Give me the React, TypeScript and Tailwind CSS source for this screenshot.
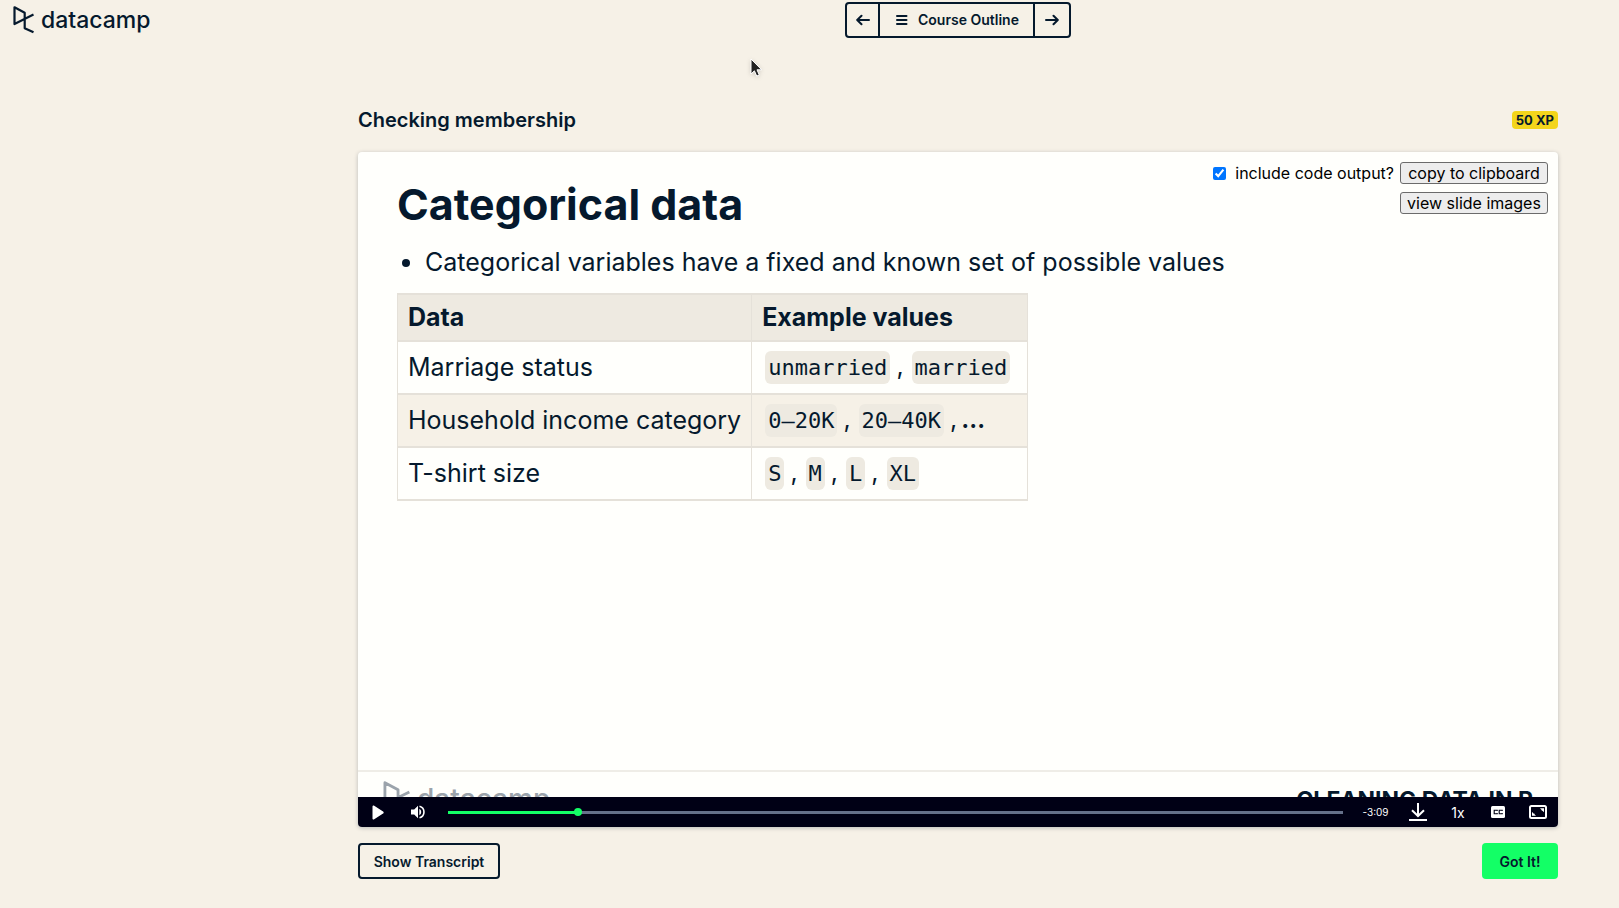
import { useState } from 'react'

type IconProps = { className?: string }

function Logo({ className, small }: { className?: string; small?: boolean }) {
  return (
    <span className={`flex items-center gap-[7px] ${className ?? ''}`}>
      <svg
        viewBox="0 0 21 28"
        fill="none"
        stroke="currentColor"
        strokeWidth="2.2"
        strokeLinejoin="round"
        className={small ? 'h-7 w-[21px]' : 'h-[36px] w-[27px]'}
        aria-hidden="true"
      >
        <path d="M20.500 8.500 1.500 18V1.300L11.700 6.800v15.400l8.800 4.100" />
      </svg>
      <span className={small ? 'text-[23px] font-medium leading-7' : 'text-[28px] font-medium leading-9'}>datacamp</span>
    </span>
  )
}

function ArrowIcon({ className }: IconProps) {
  return (
    <svg viewBox="0 0 14 12" fill="none" stroke="currentColor" strokeWidth="2" strokeLinecap="round" strokeLinejoin="round" className={`h-3 w-[14px] ${className ?? ''}`} aria-hidden="true">
      <path d="M13 6H1.5M5.500 1.700 1.200 6l4.300 4.300" />
    </svg>
  )
}

function MenuIcon() {
  return (
    <svg viewBox="0 0 12 10" fill="none" stroke="currentColor" strokeWidth="2" strokeLinecap="round" className="h-[10px] w-3" aria-hidden="true">
      <path d="M1 1h9.5M1 5h9.5M1 9h9.5" />
    </svg>
  )
}

function PlayIcon() {
  return (
    <svg viewBox="0 0 12 15" fill="currentColor" className="h-[15px] w-3" aria-hidden="true">
      <path d="M.5 1.500C.5.5 1.400.2 2.200.7l8.900 5.700c.8.5.8 1.600 0 2.100l-8.900 5.800c-.8.5-1.700.1-1.700-.8z" />
    </svg>
  )
}

function VolumeIcon() {
  return (
    <svg viewBox="0 0 15 14" className="h-[14px] w-[15px]" aria-hidden="true">
      <path fill="currentColor" d="M0 4.500h3.200L7 .7v12.600L3.200 9.500H0z" />
      <path fill="currentColor" d="M8.300 3.800a3.600 3.600 0 0 1 0 6.400z" />
      <path fill="none" stroke="currentColor" strokeWidth="1.600" d="M8.500 1.200a6 6 0 0 1 0 11.600" />
    </svg>
  )
}

function DownloadIcon() {
  return (
    <svg viewBox="0 0 18 18" fill="none" stroke="currentColor" strokeWidth="2" className="size-[18px]" aria-hidden="true">
      <path d="M9 0v13M3 7.200 9 13l6-5.800M0 17h18" />
    </svg>
  )
}

function CaptionsIcon() {
  return (
    <svg viewBox="0 0 14 12" className="h-3 w-[14px]" aria-hidden="true">
      <rect width="14" height="12" rx="1.500" fill="currentColor" />
      <path fill="none" stroke="#000015" strokeWidth="1.100" d="M6.200 5V4.300H3.200v3.400h3V7M11.200 5V4.300h-3v3.400h3V7" />
    </svg>
  )
}

function FullscreenIcon() {
  return (
    <svg viewBox="0 0 18 14" className="h-[14px] w-[18px]" aria-hidden="true">
      <rect x="1" y="1" width="16" height="12" rx="1.500" fill="none" stroke="currentColor" strokeWidth="2" />
      <path fill="currentColor" d="M11 3.300h4v4l-1.500-1.500-.8.300.2-.9zM3 6.700v4h4L5.500 9.300l-.2-.9-.9.200z" />
    </svg>
  )
}

function Pointer() {
  return (
    <svg viewBox="0 0 14 20" className="pointer-events-none absolute left-[750px] top-[58px] h-5 w-[14px] drop-shadow-sm" aria-hidden="true">
      <path d="M1 1v15l3.400-3.200 2.300 5.300 2.600-1.100L7 11.800h4.700z" fill="#222" stroke="#fff" strokeWidth="1" />
    </svg>
  )
}

function Code({ children }: { children: string }) {
  return (
    <code className="rounded-md bg-[#eeeae1] px-[3px] py-1 font-['DejaVu_Sans_Mono',monospace] text-[22px]">
      {children}
    </code>
  )
}

const rows = [
  { name: 'Marriage status', values: ['unmarried', 'married'], more: false },
  { name: 'Household income category', values: ['0–20K', '20–40K'], more: true },
  { name: 'T-shirt size', values: ['S', 'M', 'L', 'XL'], more: false },
]

const cell = 'border-x border-[#e5e1d9] px-[10px] pb-[2px] text-left'
const control = 'flex h-[30px] w-10 shrink-0 items-center justify-center'
const clip = 'h-[22px] rounded-[3px] border border-[#6b6b6b] bg-[#ededed] text-[16px] leading-[18px] text-black'

export default function App() {
  const [progress, setProgress] = useState(142)
  const [output, setOutput] = useState(true)

  return (
    <div className="relative min-h-screen bg-[#f6f1e7] font-['Inter',sans-serif] text-[#05192d]">
      <header className="grid h-10 grid-cols-[297px_1fr]">
        <a href="#" aria-label="datacamp" className="flex items-center pl-[13px]">
          <Logo small />
        </a>
        <nav className="flex items-center justify-center">
          <div className="flex h-9 divide-x-2 divide-[#05192d] rounded border-2 border-[#05192d] text-[14px] font-semibold leading-5">
            <button type="button" aria-label="Previous" className="flex w-[33px] items-center justify-center">
              <ArrowIcon />
            </button>
            <button type="button" className="flex w-[155px] items-center justify-center gap-[10px] pl-[2px]">
              <MenuIcon />
              Course Outline
            </button>
            <button type="button" aria-label="Next" className="flex w-[34px] items-center justify-center">
              <ArrowIcon className="rotate-180" />
            </button>
          </div>
        </nav>
      </header>

      <main className="pl-[297px]">
        <div className="mx-auto max-w-[1200px] pt-[68px]">
          <div className="flex h-6 items-center justify-between">
            <h1 className="text-[20px] font-semibold leading-6">Checking membership</h1>
            <span className="rounded bg-[#f3d51c] px-1 text-[13px] font-bold leading-[18px]">50 XP</span>
          </div>

          <section className="mt-5 overflow-hidden rounded bg-[#fffffc] shadow-[0_1px_4px_rgba(5,25,45,0.25)]">
            <div className="relative flex h-[645px] flex-col overflow-hidden">
              <div className="absolute right-[10px] top-[10px] flex flex-col items-end gap-2">
                <div className="flex items-center">
                  <input
                    id="output"
                    type="checkbox"
                    checked={output}
                    onChange={(e) => setOutput(e.target.checked)}
                    className="mr-[9px] size-[13px] accent-[#0075ff]"
                  />
                  <label htmlFor="output" className="mr-[6px] text-[16px] leading-[22px] text-black">
                    include code output?
                  </label>
                  <button type="button" className={`${clip} w-[148px]`}>copy to clipboard</button>
                </div>
                <button type="button" className={`${clip} w-[148px]`}>view slide images</button>
              </div>

              <div className="grow px-[39px] pt-6">
                <h2 className="text-[43px] font-bold leading-[56px]">Categorical data</h2>
                <ul className="mt-3 list-disc pl-[28px] text-[25px] leading-9">
                  <li>Categorical variables have a fixed and known set of possible values</li>
                </ul>
                <table className="mt-[13px] border-collapse text-[25px] leading-8">
                  <thead>
                    <tr className="h-[47px] border-y-2 border-[#e5e1d9] bg-[#eeeae1]">
                      <th className={`${cell} w-[353px] font-bold`}>Data</th>
                      <th className={`${cell} w-[276px] font-bold`}>Example values</th>
                    </tr>
                  </thead>
                  <tbody>
                    {rows.map((row) => (
                      <tr key={row.name} className="h-[53px] border-b-2 border-[#e5e1d9] even:bg-[#f6f1e7]">
                        <td className={`${cell} whitespace-nowrap`}>{row.name}</td>
                        <td className={cell}>
                          <span className="flex items-center gap-2 pl-[3px]">
                            {row.values.map((v, i) => (
                              <span key={v} className="whitespace-nowrap">
                                <Code>{v}</Code>
                                {i < row.values.length - 1 && <span className="pl-[6px]">,</span>}
                                {i === row.values.length - 1 && row.more && (
                                  <span className="pl-[6px]">,<span className="pl-1 font-semibold">…</span></span>
                                )}
                              </span>
                            ))}
                          </span>
                        </td>
                      </tr>
                    ))}
                  </tbody>
                </table>
              </div>

              <footer className="flex h-[27px] shrink-0 items-start justify-between border-t-2 border-[#efede7] pl-[25px] pr-[25px]">
                <Logo className="mt-[9px] text-[#9ba3ab]" />
                <p className="mt-[13px] text-[23px] font-bold leading-[30px]">CLEANING DATA IN R</p>
              </footer>
            </div>

            <div className="flex h-[30px] items-center bg-[#000015] text-white">
              <button type="button" aria-label="Play" className={control}><PlayIcon /></button>
              <button type="button" aria-label="Mute" className={control}><VolumeIcon /></button>
              <input
                type="range"
                aria-label="Seek"
                min={0}
                max={1000}
                value={progress}
                onChange={(e) => setProgress(Number(e.target.value))}
                className="mx-[10px] h-[3px] min-w-0 grow appearance-none [&::-webkit-slider-thumb]:size-2 [&::-webkit-slider-thumb]:appearance-none [&::-webkit-slider-thumb]:rounded-full [&::-webkit-slider-thumb]:bg-[#13ff66]"
                style={{ background: `linear-gradient(to right, #13ff66 ${progress / 10}%, #65708a ${progress / 10}%)` }}
              />
              <span className="w-[45px] shrink-0 text-center text-[10px]">-3:09</span>
              <button type="button" aria-label="Download" className={control}><DownloadIcon /></button>
              <button type="button" aria-label="Playback speed" className={`${control} text-[14px]`}>1x</button>
              <button type="button" aria-label="Captions" className={control}><CaptionsIcon /></button>
              <button type="button" aria-label="Full screen" className={control}><FullscreenIcon /></button>
            </div>
          </section>

          <div className="mt-4 flex justify-between text-[14px] font-semibold">
            <button type="button" className="h-9 w-[142px] rounded border-2 border-[#05192d]">Show Transcript</button>
            <button type="button" className="h-9 w-[76px] rounded bg-[#13ff66]">Got It!</button>
          </div>
        </div>
      </main>

      <Pointer />
    </div>
  )
}
